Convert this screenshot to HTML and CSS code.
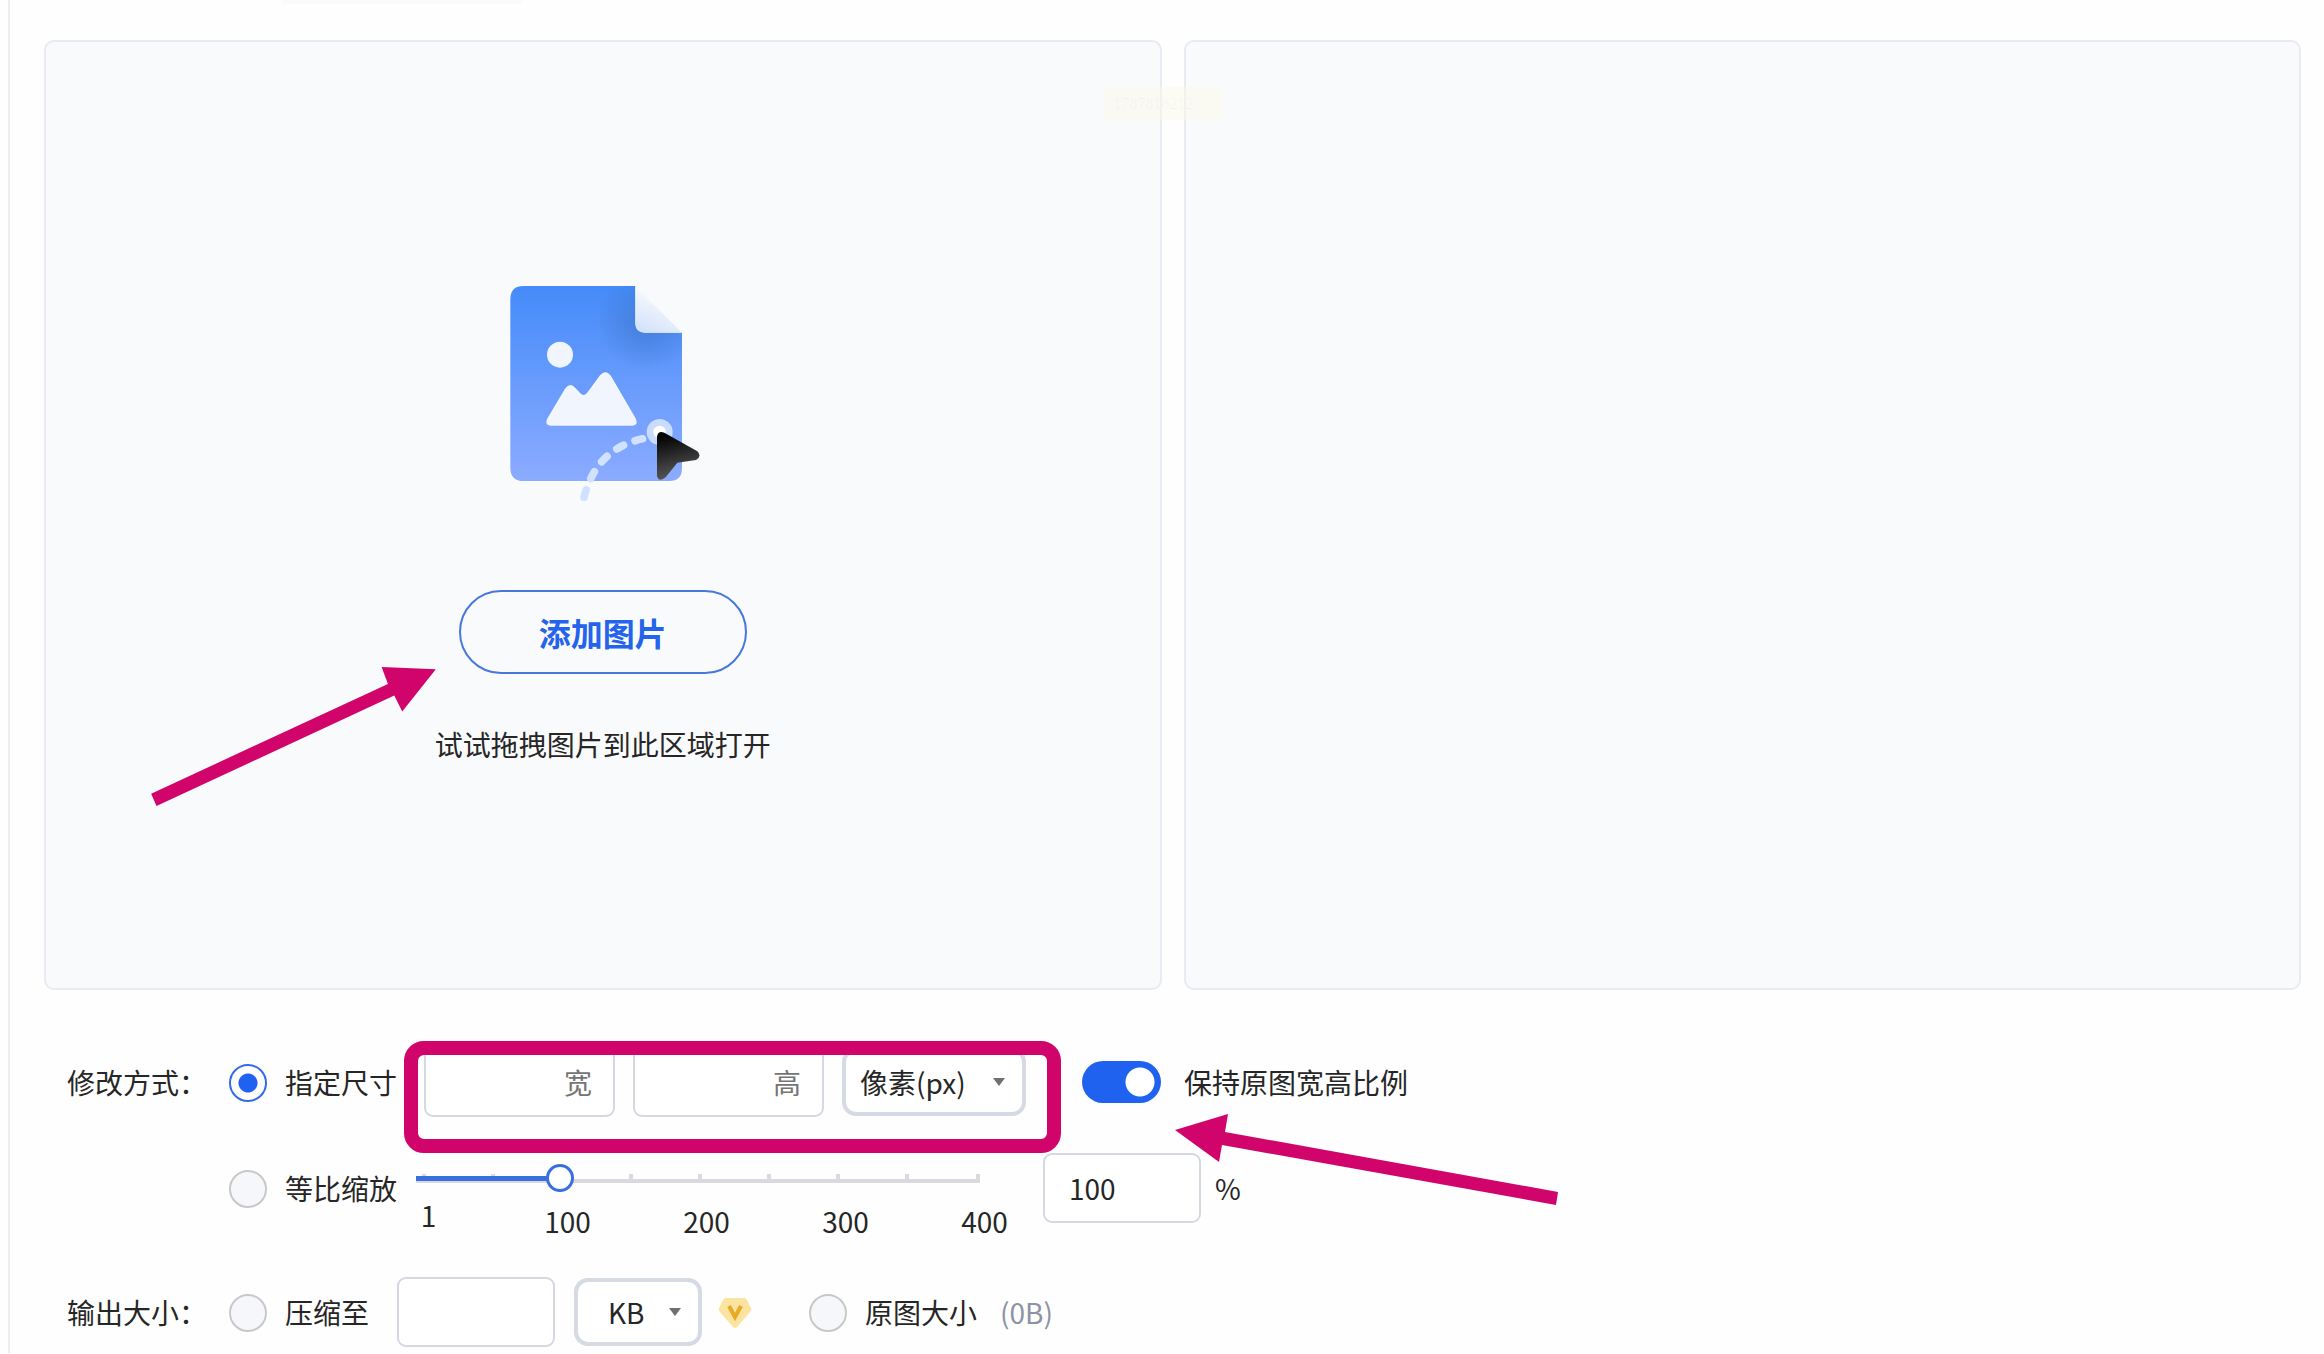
FILE: index.html
```html
<!DOCTYPE html>
<html lang="zh-CN">
<head>
<meta charset="utf-8">
<title>修改图片尺寸</title>
<link rel="stylesheet" href="styles.css">
</head>
<body>
<main class="workspace">
  <div class="tab-edge"></div>
  <section class="panels">
    <div class="panel">
      <svg class="illustration" viewBox="75 75 588 645" aria-hidden="true">
        <defs>
          <linearGradient id="page" x1="0" y1="0" x2="0" y2="1"><stop offset="0" stop-color="#448bf9"/><stop offset="1" stop-color="#8cabff"/></linearGradient>
          <linearGradient id="fold" x1="0.7" y1="0.1" x2="0.3" y2="1"><stop offset="0.2" stop-color="#f7f9fc"/><stop offset="1" stop-color="#d3e2fc"/></linearGradient>
          <radialGradient id="shade" gradientUnits="userSpaceOnUse" cx="500" cy="180" r="150"><stop offset="0" stop-color="#3d74c8" stop-opacity="0.7"/><stop offset="1" stop-color="#3d74c8" stop-opacity="0"/></radialGradient>
          <linearGradient id="pointer" x1="0.2" y1="0" x2="0.4" y2="1"><stop offset="0.1" stop-color="#050505"/><stop offset="1" stop-color="#5a5a5a"/></linearGradient>
        </defs>
        <path d="M131 75H466V190Q468 215 494 215H606V622Q606 660 568 660H131Q91 660 91 620V115Q91 75 131 75Z" fill="url(#page)"/>
        <path d="M340 75H466V190Q468 215 494 215H606V340H340Z" fill="url(#shade)"/>
        <path d="M466 75L606 215H494Q466 215 466 187Z" fill="url(#fold)"/>
        <circle cx="240" cy="281" r="39" fill="#f1f6fe"/>
        <path d="M201 474L255 383Q270 362 287 382L301 397Q311 407 321 396L360 343Q377 323 393 345L468 474Q475 493 457 494H212Q194 493 201 474Z" fill="#f1f6fe"/>
        <path d="M312 709Q350 560 494 532" fill="none" stroke="#d0e2ff" stroke-width="23" stroke-linecap="round" stroke-dasharray="23 37"/>
        <circle cx="539" cy="513" r="39" fill="#c9dbfe"/>
        <circle cx="539" cy="513" r="19" fill="#fff"/>
        <path d="M531 526Q535 507 553 515L652 571Q667 586 648 597L592 605L557 649Q537 665 531 646Z" fill="url(#pointer)"/>
      </svg>
      <div class="add">
        <button class="add-button" type="button">添加图片</button>
        <svg class="arrow arrow-add" viewBox="93 79 856 418" aria-hidden="true"><path d="M93 460L805 130L786 79L949 86L848 213L824 165L109 497Z"/></svg>
      </div>
      <p class="hint">试试拖拽图片到此区域打开</p>
    </div>
    <div class="panel"></div>
    <div class="watermark">1787818212</div>
  </section>
  <form class="settings">
    <div class="row">
      <span class="caption">修改方式：</span>
      <label class="option"><input class="radio" type="radio" name="mode" checked>指定尺寸</label>
      <div class="size-group">
        <input class="field field-size" type="text" placeholder="宽" aria-label="宽">
        <input class="field field-size" type="text" placeholder="高" aria-label="高">
        <span class="select-box"><select class="select select-unit" aria-label="单位"><option>像素(px)</option></select></span>
        <div class="highlight"></div>
      </div>
      <label class="option option-switch"><input class="switch" type="checkbox" role="switch" checked>保持原图宽高比例
        <svg class="arrow arrow-switch" viewBox="1175 1113 384 92" aria-hidden="true"><path d="M1175 1129L1228 1113L1225 1131L1558 1191L1556 1204L1222 1144L1219 1161Z"/></svg>
      </label>
    </div>
    <div class="row">
      <span class="caption"></span>
      <label class="option"><input class="radio" type="radio" name="mode">等比缩放</label>
      <div class="slider">
        <div class="track">
          <svg class="ticks" viewBox="0 0 564 9" aria-hidden="true"><path d="M0 7H564M8 0V9M77 0V9M146 0V9M215 0V9M284 0V9M353 0V9M422 0V9M491 0V9M562 0V9"/></svg>
          <input class="range" type="range" min="1" max="400" value="98" aria-label="缩放比例">
        </div>
        <div class="scale"><span class="first">1</span><span>100</span><span>200</span><span>300</span><span>400</span></div>
      </div>
      <label class="percent"><input class="field field-short" type="text" value="100">%</label>
    </div>
    <div class="row">
      <span class="caption">输出大小：</span>
      <label class="option"><input class="radio" type="radio" name="output">压缩至</label>
      <input class="field field-short field-target" type="text" aria-label="压缩至">
      <span class="select-box"><select class="select select-kb" aria-label="大小单位"><option>KB</option></select></span>
      <svg class="vip" viewBox="0 0 34 34" aria-hidden="true"><path d="M8 2H26Q28 2 29 4L33 12Q34 14 32 16L19 31Q17 33 15 31L2 16Q0 14 1 12L5 4Q6 2 8 2Z" fill="#fde3a0"/><path d="M11 10L17 21L23 10" fill="none" stroke="#e5ab22" stroke-width="4"/></svg>
      <label class="option option-original"><input class="radio" type="radio" name="output">原图大小</label>
      <span class="bytes">(0B)</span>
    </div>
  </form>
</main>
</body>
</html>
```
FILE: styles.css
```css
* { box-sizing: border-box; }
body {
  margin: 0;
  background: #fefefe;
  color: #262626;
  font: 28px/40px "Noto Sans CJK SC", sans-serif;
}
input, select, button { margin: 0; font: inherit; color: inherit; }
.workspace {
  position: relative;
  margin-left: 8px;
  padding: 40px 23px 6px 34px;
  border-left: 2px solid #ededf0;
}
.tab-edge {
  position: absolute;
  top: 0;
  left: 272px;
  width: 240px;
  height: 4px;
  border-radius: 0 0 8px 8px;
  background: #fafafa;
}
.panels { position: relative; display: grid; grid-template-columns: 1fr 1fr; gap: 22px; }
.panel {
  display: flex;
  flex-direction: column;
  align-items: center;
  min-height: 950px;
  padding-top: 244px;
  border: 2px solid #e8ebf1;
  border-radius: 10px;
  background: #f8fafc;
}
.watermark {
  position: absolute;
  top: 47px;
  left: calc(50% - 69px);
  width: 118px;
  height: 33px;
  padding-left: 10px;
  background: rgb(252 251 232 / 45%);
  color: rgb(120 120 120 / 6%);
  font: 16px/33px "Liberation Serif", serif;
}
.illustration { width: 196px; height: 215px; }
.add { position: relative; margin-top: 89px; }
.add-button {
  display: block;
  width: 288px;
  height: 84px;
  border: 2px solid #4677dc;
  border-radius: 42px;
  background: transparent;
  color: #2463eb;
  font-size: 32px;
  font-weight: 700;
}
.hint { margin: 50px 0 0; }
.arrow { position: absolute; fill: #d1046b; }
.arrow-add { left: -308px; top: 77px; width: 285px; height: 139px; }

.settings { display: flex; flex-direction: column; gap: 36px; padding: 57px 0 0 23px; }
.row { display: flex; align-items: flex-start; }
.caption, .option, .percent, .bytes { display: flex; align-items: center; height: 70px; white-space: nowrap; }
.caption { width: 162px; flex: none; }
.option { gap: 18px; }
.radio {
  appearance: none;
  width: 38px;
  height: 38px;
  margin-top: 2px;
  border: 2px solid #c8c8c8;
  border-radius: 50%;
  background: #f5f7fa;
}
.radio:checked { border-color: #2f6bea; background: radial-gradient(circle, #1f62f0 9px, #fff 10px); }
.size-group { position: relative; display: flex; gap: 18px; margin-left: 27px; }
.field {
  height: 70px;
  padding: 0 24px;
  border: 2px solid #d4d8e0;
  border-radius: 9px;
  background: #fff;
}
.field-size { width: 191px; padding: 0 21px; text-align: right; }
.field::placeholder { color: #757575; }
.field-short { width: 158px; }
.select-box { position: relative; display: flex; align-items: center; height: 70px; }
.select-box::after {
  content: "";
  position: absolute;
  right: 21px;
  border: 6px solid transparent;
  border-top: 8px solid #707070;
  border-bottom: 0;
  pointer-events: none;
}
.select {
  appearance: none;
  height: 68px;
  border: 4px solid #d6dae5;
  border-radius: 14px;
  background: #fff;
}
.select-unit { width: 184px; padding: 0 14px; }
.select-kb { width: 128px; padding: 0 30px; }
.highlight {
  position: absolute;
  top: -6px;
  right: -35px;
  bottom: -36px;
  left: -20px;
  border: 14px solid #d1046b;
  border-radius: 20px;
  pointer-events: none;
}
.option-switch { position: relative; gap: 23px; margin-left: 56px; }
.switch {
  appearance: none;
  width: 79px;
  height: 42px;
  border-radius: 21px;
  background: radial-gradient(circle at 58px 21px, #fff 14px, #1f62f0 15px);
}
.arrow-switch { left: 93px; top: 67px; width: 384px; height: 92px; }

.slider { width: 600px; height: 88px; padding-top: 11px; margin-left: 19px; }
.track { position: relative; width: 564px; height: 28px; }
.ticks { position: absolute; top: 10px; left: 0; width: 564px; height: 9px; fill: none; stroke: #d9dadd; stroke-width: 4; }
.range {
  appearance: none;
  position: relative;
  display: block;
  width: 564px;
  height: 28px;
  background: linear-gradient(#3a6fe0, #3a6fe0) 0 50% / 140px 5px no-repeat;
}
.range::-webkit-slider-thumb {
  appearance: none;
  width: 28px;
  height: 28px;
  border: 3px solid #3a6fe0;
  border-radius: 50%;
  background: #fff;
}
.scale { display: flex; width: 695px; margin-left: -57px; padding-top: 11px; line-height: 36px; text-align: center; }
.scale span { flex: 1; }
.scale .first { line-height: 24px; }
.percent { gap: 14px; margin-left: 27px; }
.field-target { margin-left: 28px; }
.field-target + .select-box { margin-left: 19px; }
.vip { width: 34px; height: 34px; margin: 19px 0 0 16px; }
.option-original { margin-left: 57px; }
.bytes { margin-left: 23px; color: #8d93a3; }
```
